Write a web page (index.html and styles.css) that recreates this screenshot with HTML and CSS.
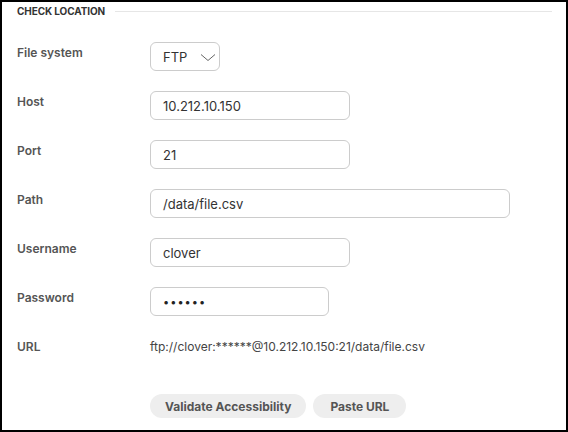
FILE: index.html
```html
<!DOCTYPE html>
<html>
<head>
<meta charset="utf-8">
<link rel="stylesheet" href="styles.css">
</head>
<body>
<div class="panel">
  <div class="section-head">
    <span class="section-title">CHECK LOCATION</span>
    <span class="section-rule"></span>
  </div>
  <div class="form">
    <div class="label">File system</div>
    <div class="field">
      <div class="select">
        <span>FTP</span>
        <svg class="chev" width="16" height="9" viewBox="0 0 16 9"><path d="M1 1.5 L8 7.5 L15 1.5" fill="none" stroke="#666" stroke-width="1"/></svg>
      </div>
    </div>

    <div class="label">Host</div>
    <div class="field"><div class="input w200">10.212.10.150</div></div>

    <div class="label">Port</div>
    <div class="field"><div class="input w200">21</div></div>

    <div class="label">Path</div>
    <div class="field"><div class="input w360">/data/file.csv</div></div>

    <div class="label">Username</div>
    <div class="field"><div class="input w200">clover</div></div>

    <div class="label">Password</div>
    <div class="field"><div class="input w179 dots">••••••</div></div>

    <div class="label">URL</div>
    <div class="field"><div class="url">ftp://clover:******@10.212.10.150:21/data/file.csv</div></div>
  </div>
  <div class="actions">
    <button class="btn">Validate Accessibility</button>
    <button class="btn wide">Paste URL</button>
  </div>
</div>
</body>
</html>
```
FILE: styles.css
```css
* { box-sizing: border-box; }
html, body { margin: 0; padding: 0; }
body {
  width: 568px;
  height: 432px;
  background: #fff;
  font-family: Inter, "Liberation Sans", sans-serif;
  color: #333;
}
.panel {
  width: 568px;
  height: 432px;
  border: 2px solid #000;
  padding: 0 14px 0 15px;
}
.section-head {
  display: flex;
  align-items: center;
  height: 18px;
  gap: 10px;
}
.section-title {
  font-size: 10px;
  font-weight: 700;
  color: #333;
  letter-spacing: -0.1px;
}
.section-rule {
  flex: 1;
  height: 1px;
  background: #e6e6e6;
}
.form {
  display: grid;
  grid-template-columns: 133px 1fr;
  row-gap: 20px;
  margin-top: 22px;
}
.label {
  font-size: 12px;
  font-weight: 600;
  color: #555;
  line-height: 16px;
  padding-top: 3px;
}
.field { display: flex; }
.select, .input {
  height: 29px;
  border: 1px solid #ccc;
  border-radius: 6px;
  font-size: 13px;
  color: #333;
  display: flex;
  align-items: center;
  padding-left: 12px;
}
.select {
  width: 70px;
  gap: 13px;
}
.chev { margin-top: 1px; }
.w200 { width: 200px; }
.w360 { width: 360px; }
.w179 { width: 179px; }
.dots { font-size: 11px; letter-spacing: 1px; color: #222; }
.url {
  font-size: 12px;
  color: #444;
  line-height: 16px;
  padding-top: 3px;
}
.actions {
  display: flex;
  gap: 7px;
  margin-top: 39px;
  padding-left: 133px;
}
.btn {
  height: 24px;
  border: none;
  border-radius: 12px;
  background: #eeeeee;
  font-family: Inter, "Liberation Sans", sans-serif;
  font-size: 12px;
  font-weight: 700;
  color: #555;
  padding: 0 15px;
}
.btn.wide { padding: 0 17px; }
```
